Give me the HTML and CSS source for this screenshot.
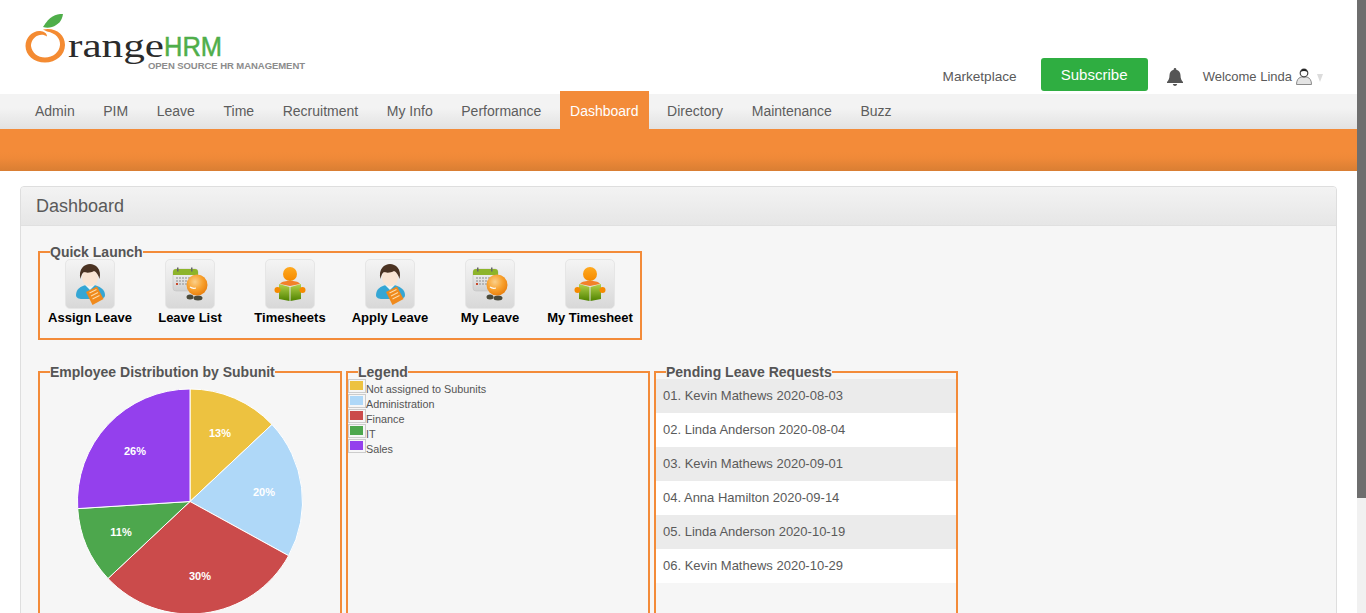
FILE: index.html
```html
<!DOCTYPE html>
<html lang="en">
<head>
<meta charset="utf-8">
<title>OrangeHRM</title>
<link rel="stylesheet" href="styles.css">
</head>
<body>
<svg class="defs" width="0" height="0" aria-hidden="true">
  <defs>
    <linearGradient id="bookG" x1="0" y1="0" x2="0" y2="1"><stop offset="0" stop-color="#b5d24a"/><stop offset="1" stop-color="#4f8300"/></linearGradient>
    <radialGradient id="ballG" cx=".4" cy=".35" r=".7"><stop offset="0" stop-color="#fbd08a"/><stop offset=".55" stop-color="#f8a02c"/><stop offset="1" stop-color="#e87d0c"/></radialGradient>
    <linearGradient id="headG" x1="0" y1="0" x2="0" y2="1"><stop offset="0" stop-color="#ffa91f"/><stop offset="1" stop-color="#f58a00"/></linearGradient>
    <linearGradient id="calG" x1="0" y1="0" x2="0" y2="1"><stop offset="0" stop-color="#f6f6f6"/><stop offset="1" stop-color="#cfcfcf"/></linearGradient>
    <symbol id="ic-person" viewBox="0 0 50 50">
      <path d="M11 36c0-6 5-9 10-10h8c5 1 11 4 11 10 0 3-3 4-6 4H17c-3 0-6-1-6-4z" fill="#35a6d4"/>
      <path d="M20 26l5 5 5-5-5-2z" fill="#eef6f8"/>
      <ellipse cx="25" cy="18" rx="8" ry="9.500" fill="#f9e4d3"/>
      <path d="M15.500 20c-2.500-10 4-15 9.500-15s12 5 9.500 15c-1-4-3-7-5.500-8-3 2-8 2-10 1-2 1-2.500 3-3.500 7z" fill="#4b3323"/>
      <path d="M21 33l11-5.500 6.500 12.500-11 6z" fill="#f08a1c"/>
      <path d="M24.500 34l7-3.500M26 37l7-3.500M27.500 40l7-3.500" stroke="#fbd9a8" stroke-width="1.200"/>
    </symbol>
    <symbol id="ic-calendar" viewBox="0 0 50 50">
      <rect x="8" y="10" width="25" height="22" rx="3" fill="url(#calG)" stroke="#c4c4c4" stroke-width=".6"/>
      <path d="M8 16v-3c0-2 1-3 3-3h19c2 0 3 1 3 3v3z" fill="#8db42a"/>
      <rect x="12" y="8.500" width="1.500" height="4" fill="#666"/><rect x="26" y="8.500" width="1.500" height="4" fill="#666"/>
      <path d="M11 19h18M11 22h18M11 25h18" stroke="#a9a9a9" stroke-width="1.500" stroke-dasharray="2 1"/>
      <rect x="11" y="24" width="2" height="2" fill="#c8492c"/>
      <ellipse cx="25" cy="38" rx="3.500" ry="2.500" fill="#4a4a3c"/>
      <ellipse cx="33" cy="39" rx="4.500" ry="2.500" fill="#4a4a3c"/>
      <circle cx="32" cy="26" r="10.500" fill="url(#ballG)"/>
      <path d="M25 28c2 1.500 4 1.500 6 1" stroke="#fff" stroke-width="1.200" fill="none"/>
    </symbol>
    <symbol id="ic-reader" viewBox="0 0 50 50">
      <circle cx="25" cy="15" r="7" fill="url(#headG)"/>
      <path d="M15 25c2-3 6-3 10-3s8 0 10 3l-10 2z" fill="#f2812a"/>
      <path d="M14 25l10.500 3v14L14 40zM36 25l-10.500 3v14L36 40z" fill="url(#bookG)"/>
      <circle cx="12.500" cy="31" r="3" fill="#f58a00"/><circle cx="37.500" cy="31" r="3" fill="#f58a00"/>
    </symbol>
  </defs>
</svg>
<div class="page">
  <div class="main">
    <header class="top">
      <svg class="logo" width="310" height="80" viewBox="0 0 310 80" role="img" aria-label="OrangeHRM">
        <path d="M43 27C50 16 55 14 63 14c-1 7-5 11-11 13-3 1-6 1-9 0z" fill="#4fae4a"/>
        <path d="M43 29.500C55 27 65 34 65 45 65 55 56 62.500 45 62.500 34 62.500 25.500 55 25.500 46 25.500 37 33 30.500 40 31 44 31.500 47 33 47 36.500 44 34.500 41 34.500 38 35.500 33 37.500 31 42 31 46 32 53 38 57.500 45 57.500 53 57.500 59.500 52 60 45 60.500 39 56 33 47 31.500z" fill="#f48b32"/>
        <text x="68" y="57" class="logo-range" textLength="96" lengthAdjust="spacingAndGlyphs">range</text>
        <text x="164" y="56" class="logo-hrm" textLength="58" lengthAdjust="spacingAndGlyphs">HRM</text>
        <text x="148" y="69" class="logo-tag" textLength="157" lengthAdjust="spacing">OPEN SOURCE HR MANAGEMENT</text>
      </svg>
      <div class="top-right">
        <a class="market">Marketplace</a>
        <a class="subscribe">Subscribe</a>
        <svg class="bell" width="16" height="18" viewBox="0 0 16 18" aria-hidden="true">
          <path d="M8 0c-.8 0-1.300.6-1.300 1.300v.4C4 2.300 2.500 4.600 2.500 7.300c0 3.600-1 5-2.500 6.700v1h16v-1c-1.500-1.700-2.500-3.100-2.500-6.700 0-2.700-1.500-5-4.200-5.600v-.4C9.300.6 8.800 0 8 0zM5.800 16c.3 1.200 1.200 2 2.200 2s1.900-.8 2.200-2z" fill="#555"/>
        </svg>
        <span class="welcome">Welcome Linda</span>
        <svg class="user" width="16" height="18" viewBox="0 0 16 18" aria-hidden="true">
          <path d="M.5 17.500c0-4 1.500-6.500 4.500-7.500h6c3 1 4.500 3.500 4.500 7.500z" fill="#e4e4e4" stroke="#8a8a8a" stroke-width="1"/>
          <circle cx="8" cy="6" r="3.800" fill="#fff" stroke="#444" stroke-width="1.200"/>
          <path d="M4.500 5C5 1 11 1 11.500 5 9.500 3.500 6.500 3.500 4.500 5z" fill="#222"/>
        </svg>
        <span class="caret"></span>
      </div>
    </header>
    <nav class="menu">
      <a class="menu-item">Admin</a>
      <a class="menu-item">PIM</a>
      <a class="menu-item">Leave</a>
      <a class="menu-item">Time</a>
      <a class="menu-item">Recruitment</a>
      <a class="menu-item">My Info</a>
      <a class="menu-item">Performance</a>
      <a class="menu-item active">Dashboard</a>
      <a class="menu-item">Directory</a>
      <a class="menu-item">Maintenance</a>
      <a class="menu-item">Buzz</a>
    </nav>
    <div class="band"></div>
    <section class="panel">
      <h1 class="panel-head">Dashboard</h1>
      <div class="panel-body">
        <fieldset class="box quick">
          <legend>Quick Launch</legend>
          <div class="launch">
            <a class="launch-item"><span class="tile"><svg width="50" height="50"><use href="#ic-person"/></svg></span><span class="launch-label">Assign Leave</span></a>
            <a class="launch-item"><span class="tile"><svg width="50" height="50"><use href="#ic-calendar"/></svg></span><span class="launch-label">Leave List</span></a>
            <a class="launch-item"><span class="tile"><svg width="50" height="50"><use href="#ic-reader"/></svg></span><span class="launch-label">Timesheets</span></a>
            <a class="launch-item"><span class="tile"><svg width="50" height="50"><use href="#ic-person"/></svg></span><span class="launch-label">Apply Leave</span></a>
            <a class="launch-item"><span class="tile"><svg width="50" height="50"><use href="#ic-calendar"/></svg></span><span class="launch-label">My Leave</span></a>
            <a class="launch-item"><span class="tile"><svg width="50" height="50"><use href="#ic-reader"/></svg></span><span class="launch-label">My Timesheet</span></a>
          </div>
        </fieldset>
        <div class="columns">
          <fieldset class="box col">
            <legend>Employee Distribution by Subunit</legend>
            <svg class="pie" width="300" height="240" viewBox="0 0 300 240">
              <g stroke="#fff" stroke-width="1">
                <path d="M150 122.500V10A112.500 112.500 0 0 1 232 45.500z" fill="#edc240"/>
                <path d="M150 122.500L232 45.500A112.500 112.500 0 0 1 248.600 176.700z" fill="#afd8f8"/>
                <path d="M150 122.500L248.600 176.700A112.500 112.500 0 0 1 68 199.500z" fill="#cb4b4b"/>
                <path d="M150 122.500L68 199.500A112.500 112.500 0 0 1 37.700 129.600z" fill="#4da74d"/>
                <path d="M150 122.500L37.700 129.600A112.500 112.500 0 0 1 150 10z" fill="#9440ed"/>
              </g>
              <g class="pie-label">
                <text x="180" y="58">13%</text>
                <text x="224" y="117">20%</text>
                <text x="160" y="201">30%</text>
                <text x="81" y="157">11%</text>
                <text x="95" y="76">26%</text>
              </g>
            </svg>
          </fieldset>
          <fieldset class="box col">
            <legend>Legend</legend>
            <ul class="legend-list">
              <li class="legend-row"><span class="swatch"><i class="sw-yellow"></i></span>Not assigned to Subunits</li>
              <li class="legend-row"><span class="swatch"><i class="sw-blue"></i></span>Administration</li>
              <li class="legend-row"><span class="swatch"><i class="sw-red"></i></span>Finance</li>
              <li class="legend-row"><span class="swatch"><i class="sw-green"></i></span>IT</li>
              <li class="legend-row"><span class="swatch"><i class="sw-purple"></i></span>Sales</li>
            </ul>
          </fieldset>
          <fieldset class="box col">
            <legend>Pending Leave Requests</legend>
            <ul class="requests">
              <li>01. Kevin Mathews 2020-08-03</li>
              <li>02. Linda Anderson 2020-08-04</li>
              <li>03. Kevin Mathews 2020-09-01</li>
              <li>04. Anna Hamilton 2020-09-14</li>
              <li>05. Linda Anderson 2020-10-19</li>
              <li>06. Kevin Mathews 2020-10-29</li>
            </ul>
          </fieldset>
        </div>
      </div>
    </section>
  </div>
  <div class="scrollbar"><div class="thumb"></div></div>
</div>
</body>
</html>
```
FILE: styles.css
```css
* { box-sizing: border-box; }
html, body { margin: 0; height: 100%; overflow: hidden; background: #fff; }
body { font-family: "Liberation Sans", Arial, sans-serif; color: #5a5a5a; }
.defs { display: block; height: 0; }
.page { display: flex; height: 613px; overflow: hidden; }
.main { flex: 1; min-width: 0; overflow: hidden; }
.scrollbar { width: 9px; background: #f1f1f1; }
.thumb { height: 498px; background: #6e6e6e; }

.top { height: 94px; display: flex; justify-content: space-between; align-items: flex-start; }
.logo { display: block; }
.logo-range { font-family: "Liberation Serif", serif; font-size: 34px; fill: #2b2b2b; }
.logo-hrm { font-family: "Liberation Sans", sans-serif; font-size: 27px; fill: #4fae4a; stroke: #4fae4a; stroke-width: .5px; }
.logo-tag { font-family: "Liberation Sans", sans-serif; font-size: 9.5px; font-weight: bold; fill: #8c8c8c; }
.top-right { display: flex; align-items: center; height: 33px; margin-top: 58px; padding-right: 34px; font-size: 14px; }
.market { margin-right: 24px; margin-top: 4px; font-size: 13.6px; }
.subscribe { width: 107px; height: 33px; line-height: 33px; text-align: center; background: #2fae41; color: #fff; font-size: 15px; border-radius: 3px; margin-right: 19px; }
.bell { margin-right: 20px; margin-top: 4px; }
.welcome { font-size: 13px; margin-top: 4px; margin-right: 4px; }
.user { margin-top: 2px; margin-right: 5px; }
.caret { width: 0; height: 0; margin-top: 7px; border-left: 3.5px solid transparent; border-right: 3.5px solid transparent; border-top: 8px solid #dcdcdc; }

.menu { display: flex; height: 35px; padding-left: 25px; gap: 8.6px; background: linear-gradient(#f3f3f3 40%, #e2e2e2); }
.menu-item { padding: 0 10px; font-size: 14px; line-height: 35px; color: #5d5d5d; }
.menu-item.active { height: 38px; margin-top: -3px; line-height: 41px; background: #f38b39; color: #fff; }
.band { height: 42px; background: linear-gradient(#f38b39 55%, #ef8938 70%, #d97e33); }

.panel { margin: 15px 20px 0; border: 1px solid #dedede; border-radius: 4px; background: #f6f6f6; overflow: hidden; }
.panel-head { margin: 0; height: 39px; padding-left: 15px; font-size: 18px; font-weight: normal; line-height: 38px; color: #5a5a5a; background: linear-gradient(#f3f3f3, #e6e6e6); border-bottom: 1px solid #e0e0e0; }
.panel-body { padding: 19px 0 0 17px; height: 420px; }

.box { margin: 0; padding: 0; min-width: 0; border: 2px solid #f38b39; }
.box legend { margin-left: 10px; padding: 0; font-size: 14px; line-height: 14px; font-weight: bold; color: #555; }
.quick { width: 604px; height: 95px; }
.launch { display: flex; }
.launch-item { width: 100px; display: flex; flex-direction: column; align-items: center; }
.tile { display: block; width: 50px; height: 50px; border: 1px solid #e6e6e6; border-radius: 5px; background: linear-gradient(#f4f4f4, #d8d8d8); overflow: hidden; }
.tile svg { display: block; margin: -1px; }
.launch-label { margin-top: 1px; font-size: 13px; line-height: 16px; font-weight: bold; color: #000; white-space: nowrap; }

.columns { display: flex; gap: 4px; margin-top: 25px; }
.col { width: 304px; height: 300px; }
.pie { display: block; }
.pie-label text { font-size: 11px; font-weight: bold; fill: #fff; text-anchor: middle; }

.legend-list { list-style: none; margin: 0; padding: 0; }
.legend-row { display: flex; align-items: flex-start; height: 15px; font-size: 10.8px; line-height: 20px; color: #545454; }
.swatch { display: block; width: 18px; height: 14px; padding: 1px 2px 2px 1px; border: 1px solid #ccc; }
.swatch i { display: block; height: 100%; }
.sw-yellow { background: #edc240; }
.sw-blue { background: #afd8f8; }
.sw-red { background: #cb4b4b; }
.sw-green { background: #4da74d; }
.sw-purple { background: #9440ed; }

.requests { list-style: none; margin: 0; padding: 0; }
.requests li { height: 34px; padding-left: 7px; font-size: 13px; line-height: 33px; color: #5a5a5a; background: #fff; }
.requests li:nth-child(odd) { background: #ebebeb; }
```
